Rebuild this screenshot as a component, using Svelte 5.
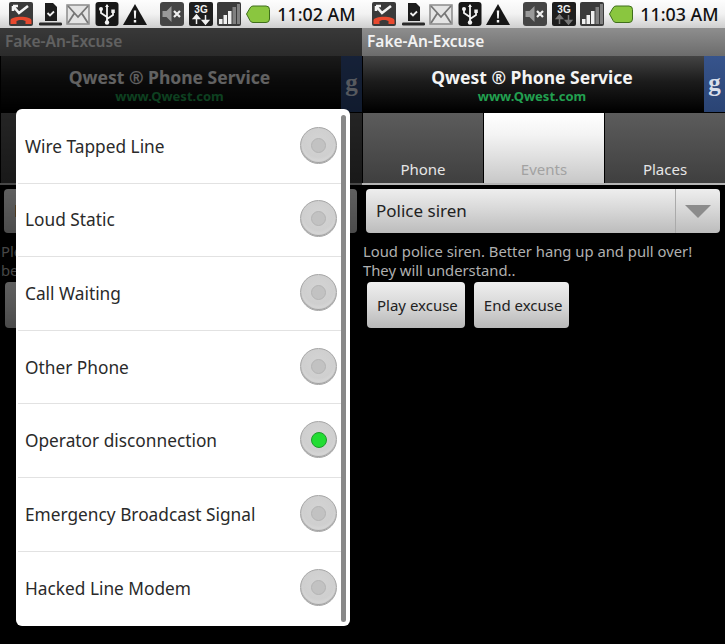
<script lang="ts">
  const excuses = [
    "Wire Tapped Line",
    "Loud Static",
    "Call Waiting",
    "Other Phone",
    "Operator disconnection",
    "Emergency Broadcast Signal",
    "Hacked Line Modem",
  ];
  let selected = $state("Operator disconnection");
  let tab = $state("Events");
  const tabs = ["Phone", "Events", "Places"];
</script>

{#snippet statusIcons(dimArrows: boolean)}
  <!-- missed call -->
  <svg class="ico" viewBox="0 0 24 24">
    <rect x="0" y="0" width="24" height="24" rx="2" fill="#3a3a3a" />
    <path d="M4 4 L10 11 L19 4 M4 4 v5 M4 4 h5" fill="none" stroke="#f4f4f4" stroke-width="2.6" />
    <path d="M1.5 22 v-3.5 c0-5 21-5 21 0 V22 h-6 v-3 c-2-1.500-7-1.500-9 0 v3z" fill="#e8492f" />
  </svg>
  <!-- sd card check -->
  <svg class="ico" viewBox="0 0 24 24">
    <path d="M7 1 h8 l4 4 v14 H7z" fill="#1c1c1c" />
    <path d="M9.500 11 l2.500 2.500 l4-4" fill="none" stroke="#eee" stroke-width="1.800" />
    <rect x="1" y="20.500" width="23" height="3" rx="1.200" fill="#2a2a2a" />
  </svg>
  <!-- gmail -->
  <svg class="ico" viewBox="0 0 24 24">
    <rect x="1" y="3" width="22" height="19" fill="#e4e4e4" stroke="#8a8a8a" stroke-width="1.500" />
    <path d="M2 4 L12 15 L22 4 M2 21 L8.500 11 M22 21 L15.500 11" fill="none" stroke="#777" stroke-width="1.800" />
  </svg>
  <!-- usb -->
  <svg class="ico" viewBox="0 0 24 24">
    <rect x="0.500" y="0" width="23" height="24" rx="3" fill="#171717" />
    <path d="M12 3 v17 M12 15 L6 11 V8 M12 17 L18 13 V10" fill="none" stroke="#f2f2f2" stroke-width="1.800" />
    <path d="M12 2 l2 3 h-4z" fill="#f2f2f2" />
    <circle cx="6" cy="7" r="2" fill="#f2f2f2" />
    <rect x="16.300" y="7.500" width="3.500" height="3.500" fill="#f2f2f2" />
    <circle cx="12" cy="20.500" r="2.200" fill="#f2f2f2" />
  </svg>
  <!-- warning -->
  <svg class="ico" viewBox="0 0 24 24">
    <path d="M12 2 L24 23 H0z" fill="#161616" />
    <path d="M10.800 8.500 h2.400 l-.4 8 h-1.600z" fill="#f4f4f4" />
    <rect x="10.800" y="18" width="2.400" height="2.500" fill="#f4f4f4" />
  </svg>
  <span class="gap"></span>
  <!-- mute -->
  <svg class="ico" viewBox="0 0 24 24">
    <rect width="24" height="24" rx="3" fill="#454545" />
    <path d="M2.500 9 h4 l5-5 v16 l-5-5 h-4z" fill="#999" />
    <path d="M14 9 l6 6 M20 9 l-6 6" stroke="#f0f0f0" stroke-width="2.200" />
  </svg>
  <!-- 3G -->
  <svg class="ico" viewBox="0 0 24 24">
    <rect width="24" height="24" rx="2" fill="#1e1e1e" />
    <text x="12" y="10.500" class="three-g">3G</text>
    <path d="M7.500 22 v-6 M4.500 16.500 l3-3.500 l3 3.500z M16.500 13 v6 M13.500 18.500 l3 3.500 l3-3.500z" stroke={dimArrows ? "#777" : "#f0f0f0"} fill={dimArrows ? "#777" : "#f0f0f0"} stroke-width="1.500" />
  </svg>
  <!-- signal -->
  <svg class="ico" viewBox="0 0 24 24">
    <rect width="24" height="24" rx="2" fill="#3a3a3a" />
    <rect x="2" y="17" width="3.500" height="5" fill="#f0f0f0" />
    <rect x="6.500" y="13" width="3.500" height="9" fill="#f0f0f0" />
    <rect x="11" y="9" width="3.500" height="13" fill="#f0f0f0" />
    <rect x="15.500" y="5" width="3.500" height="17" fill="#808080" />
    <rect x="20" y="2" width="3" height="20" fill="#808080" />
  </svg>
  <!-- battery -->
  <svg class="ico" viewBox="0 0 24 24">
    <path d="M0.500 12 L4 6 Q5 4 7 4 H20 Q23.500 4 23.500 7.500 V17 Q23.500 20.500 20 20.500 H7 Q5 20.500 4 18.500z" fill="#8ac63f" stroke="#3f6e1c" stroke-width="1" />
  </svg>
{/snippet}

{#snippet screen(time: string, desc: string[], right: boolean)}
  <div class="status" class:shift={right}>
    {@render statusIcons(right)}
    <span class="time">{time}</span>
  </div>
  <div class="body">
    <div class="title">Fake-An-Excuse</div>
    <div class="ad">
      <div class="ad-text">
        <div class="ad-name">Qwest ® Phone Service</div>
        <div class="ad-url">www.Qwest.com</div>
      </div>
      <div class="ad-g">g</div>
    </div>
    <div class="tabs">
      {#each tabs as t}
        <button class="tab" class:on={t === tab} onclick={() => (tab = t)}>{t}</button>
      {/each}
    </div>
    <div class="spinner">
      <span class="spinner-label">Police siren</span>
      <span class="spinner-arrow"><i></i></span>
    </div>
    <p class="desc">{desc[0]}<br />{desc[1]}</p>
    <div class="actions">
      <button class="act">Play excuse</button>
      <button class="act">End excuse</button>
    </div>
    {#if !right}
      <div class="dim"></div>
    {/if}
  </div>
{/snippet}

<div class="page">
  <div class="pane left">
    {@render screen("11:02 AM", ["Please select a noise to play,", "before you hang up the call."], false)}
    <div class="dialog">
      <div class="scroll"></div>
      {#each excuses as name}
        <button class="row" onclick={() => (selected = name)}>
          <span>{name}</span>
          <span class="radio" class:picked={selected === name}><i></i></span>
        </button>
      {/each}
    </div>
  </div>
  <div class="pane right">
    {@render screen("11:03 AM", ["Loud police siren. Better hang up and pull over!", "They will understand.."], true)}
  </div>
</div>

<style>
  :global(body) {
    margin: 0;
    background: #000;
  }

  .page {
    display: flex;
    width: 725px;
    height: 644px;
    overflow: hidden;
    font-family: "Noto Sans", "Open Sans", sans-serif;
  }

  .pane {
    position: relative;
    display: flex;
    flex-direction: column;
  }

  .left {
    width: 362px;
  }

  .right {
    width: 363px;
  }

  .status {
    display: flex;
    align-items: center;
    height: 28px;
    padding-left: 9px;
    background: linear-gradient(#fdfdfd, #f2f2f2 50%, #cfcfcf);
    box-sizing: border-box;
  }

  .status.shift {
    padding-left: 10px;
  }

  .ico {
    width: 24px;
    height: 24px;
    margin-right: 4.6px;
    flex: none;
  }

  .gap {
    width: 8px;
    flex: none;
  }

  .three-g {
    font: bold 10px "Liberation Sans", sans-serif;
    fill: #f0f0f0;
    text-anchor: middle;
  }

  .time {
    margin-left: 3px;
    font-size: 17.800px;
    font-weight: 500;
    color: #111;
    white-space: nowrap;
  }

  .body {
    position: relative;
    flex: 1;
    background: #000;
  }

  .dim {
    position: absolute;
    inset: 0;
    background: rgba(0, 0, 0, 0.6);
  }

  .title {
    height: 28px;
    padding-left: 5px;
    font-size: 15.500px;
    font-weight: 600;
    line-height: 27px;
    color: #f2f2f2;
    background: linear-gradient(#8e8e8e, #6c6c6c);
  }

  .ad {
    display: flex;
    height: 56px;
    margin-left: 1px;
    background: linear-gradient(#444, #1c1c1c 45%, #000);
  }

  .ad-text {
    flex: 1;
    padding-top: 9px;
    padding-right: 3px;
    text-align: center;
    box-sizing: border-box;
  }

  .ad-name {
    font-size: 17.500px;
    font-weight: 700;
    line-height: 24px;
    color: #f4f4f4;
  }

  .ad-url {
    font-size: 13px;
    font-weight: 700;
    line-height: 15px;
    color: #22a050;
  }

  .ad-g {
    width: 21px;
    font-family: "Liberation Serif", serif;
    font-size: 25px;
    font-weight: 700;
    line-height: 54px;
    text-align: center;
    color: #d8deea;
    background: linear-gradient(#37548c, #2a4474);
  }

  .tabs {
    display: flex;
    height: 72px;
    margin-top: 1px;
    border-bottom: 2px solid #b5b5b5;
    box-sizing: border-box;
    gap: 1px;
    padding-left: 1px;
  }

  .tab {
    flex: 1;
    padding: 0 0 4px;
    border: 0;
    display: flex;
    align-items: flex-end;
    justify-content: center;
    font: 15px/20px "Noto Sans", sans-serif;
    color: #e6e6e6;
    background: linear-gradient(#5c5c5c, #3f3f3f);
  }

  .tab.on {
    color: #a2a2a2;
    background: linear-gradient(#fff, #f4f4f4 30%, #c8c8c8);
  }

  .spinner {
    display: flex;
    height: 44px;
    margin: 4px 5px 0 4px;
    border-radius: 4px;
    background: linear-gradient(#eee, #d6d6d6 50%, #bcbcbc);
  }

  .spinner-label {
    flex: 1;
    padding-left: 10px;
    font-size: 17px;
    line-height: 44px;
    color: #222;
  }

  .spinner-arrow {
    display: flex;
    align-items: center;
    justify-content: center;
    width: 44px;
    border-left: 1px solid #aaa;
  }

  .spinner-arrow i {
    width: 0;
    height: 0;
    border-style: solid;
    border-width: 13px 13px 0;
    border-color: #8c8c8c transparent transparent;
  }

  .desc {
    margin: 9px 0 0 1px;
    font-size: 14.800px;
    line-height: 19px;
    color: #b0b0b0;
    white-space: nowrap;
  }

  .actions {
    display: flex;
    gap: 9px;
    margin: 2px 0 0 5px;
  }

  .act {
    height: 46px;
    padding: 0 7px 0 10px;
    border: 0;
    border-radius: 4px;
    font: 15px "Noto Sans", sans-serif;
    color: #222;
    background: linear-gradient(#efefef, #d8d8d8 50%, #b8b8b8);
  }

  .dialog {
    position: absolute;
    left: 16px;
    top: 109px;
    width: 334px;
    height: 517px;
    padding: 1px 9px 0 2px;
    box-sizing: border-box;
    border-radius: 6px;
    background: #fff;
  }

  .scroll {
    position: absolute;
    right: 4px;
    top: 6px;
    bottom: 4px;
    width: 5px;
    border-radius: 3px;
    background: #888;
  }

  .row {
    display: flex;
    align-items: center;
    justify-content: space-between;
    width: 100%;
    height: 73.6px;
    padding: 0 4px 0 7px;
    border: 0;
    border-bottom: 1px solid #e2e2e2;
    box-sizing: border-box;
    font: 17.300px "Noto Sans", sans-serif;
    color: #2a2a2a;
    background: none;
  }

  .row:last-of-type {
    border-bottom: 0;
  }

  .radio {
    display: flex;
    align-items: center;
    justify-content: center;
    width: 37px;
    height: 37px;
    margin-bottom: 2px;
    border-radius: 50%;
    box-sizing: border-box;
    border: 1px solid #a6a6a6;
    background: radial-gradient(circle at 50% 40%, #d4d4d4, #cfcfcf 55%, #e6e6e6);
    box-shadow: inset 0 -1px 1px #9c9c9c;
  }

  .radio i {
    width: 15px;
    height: 15px;
    border-radius: 50%;
    box-sizing: border-box;
    border: 1px solid #b4b4b4;
    background: #c2c2c2;
  }

  .radio.picked i {
    width: 16px;
    height: 16px;
    border-color: #1f9a2c;
    background: #22dd33;
  }
</style>
